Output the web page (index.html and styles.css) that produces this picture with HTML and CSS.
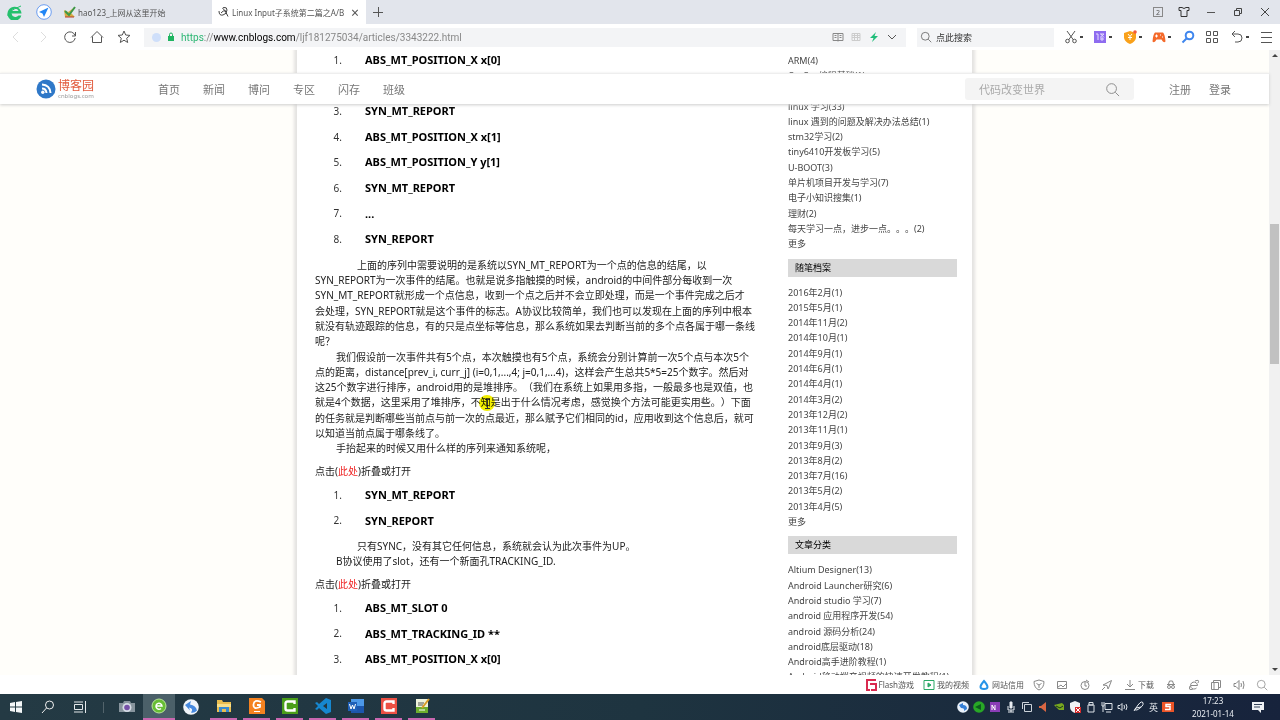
FILE: index.html
```html
<!DOCTYPE html>
<html lang="zh-CN">
<head>
<meta charset="utf-8">
<title>Linux Input子系统第二篇之A/B协议</title>
<link rel="stylesheet" href="styles.css">
</head>
<body>
<svg width="0" height="0" class="defs" aria-hidden="true">
  <symbol id="search" viewBox="0 0 16 16"><circle cx="7" cy="7" r="5.2"/><path d="M11 11l4 4"/></symbol>
  <symbol id="camtasia" viewBox="0 0 16 16"><path d="M12.500 6V3.500H5.500q-2 0-2 2v5q0 2 2 2h7V10" fill="none" stroke="#fff" stroke-width="2.400"/></symbol>
</svg>
<div class="browser">
  <header class="tabs">
    <button class="pin" aria-label="360"><svg viewBox="0 0 16 16"><path d="M14.500 9.500H4.500a4 4 0 0 0 7 2h2.800A7 7 0 1 1 14.500 9.500zM4.600 7h7a3.700 3.700 0 0 0-7 0z" fill="#25c06d"/><path d="M1 12Q-1 8 14 2" fill="none" stroke="#25c06d"/></svg></button>
    <button class="pin" aria-label="导航"><svg viewBox="0 0 16 16"><circle cx="8" cy="8" r="7.300" fill="#fff" stroke="#6a9cf0"/><path d="M12.500 3.500L3 8l3.500 1.500L8 13z" fill="#2286f5"/></svg></button>
    <div class="tab"><svg class="s12" viewBox="0 0 12 12"><path d="M0 4l4 2 7-5-4 6 4 4H1z" fill="#d7ad42"/><path d="M1 5l4 4 6-8" fill="none" stroke="#3d9846" stroke-width="2"/><path d="M1 11h9" stroke="#b53c2d"/></svg><span>hao123_上网从这里开始</span></div>
    <div class="tab active"><svg class="s12" viewBox="0 0 12 12" fill="none" stroke="#444"><path d="M1 5q0 5 4 4 4-1 4-5M9 4q0-3-3-2.500t1 3l3 6M3 7q2-3 5-2"/></svg><span class="title">Linux Input子系统第二篇之A/B</span><button class="x" aria-label="关闭标签">×</button></div>
    <button class="plus" aria-label="新标签"><svg class="s12" viewBox="0 0 12 12" stroke="#555"><path d="M1 6.500h10M6.500 1v10"/></svg></button>
    <div class="wins">
      <button class="two">2</button>
      <button aria-label="皮肤"><svg class="s12" viewBox="0 0 12 12" fill="none" stroke="#333"><path d="M1 1.500h3q2 2 4 0h3v3H9v6H3v-6H1z"/></svg></button>
      <button aria-label="最小化"><svg class="s12" viewBox="0 0 12 12" stroke="#555"><path d="M2 6.500h8"/></svg></button>
      <button aria-label="还原"><svg class="s12" viewBox="0 0 12 12" fill="none" stroke="#444"><path d="M2.500 4.500h5v5h-5zM4.500 4V2.500h5v5H8"/></svg></button>
      <button aria-label="关闭"><svg class="s12" viewBox="0 0 12 12" stroke="#444"><path d="M2 2l8 8M10 2l-8 8"/></svg></button>
    </div>
  </header>

  <div class="toolbar">
    <div class="navs">
      <button aria-label="后退"><svg class="s14" viewBox="0 0 14 14" stroke="#ddd"><path d="M9 2L4 7l5 5"/></svg></button>
      <button aria-label="前进"><svg class="s14" viewBox="0 0 14 14" stroke="#ddd"><path d="M5 2l5 5-5 5"/></svg></button>
      <button aria-label="刷新"><svg class="s14" viewBox="0 0 14 14"><path d="M12 5.500A5.300 5.300 0 1 0 12.200 8M12.500 2v4H9"/></svg></button>
      <button aria-label="主页"><svg class="s14" viewBox="0 0 14 14"><path d="M1 7.500L7 1.500l6 6M2.500 6.500v6h9v-6"/></svg></button>
      <button aria-label="收藏"><svg class="s14" viewBox="0 0 14 14"><path d="M7 1l1.700 4 4.300.4-3.300 2.800 1 4.300L7 10.200l-3.700 2.300 1-4.300L1 5.400 5.300 5z"/></svg></button>
    </div>
    <div class="address">
      <i class="dot"></i>
      <svg class="lock" viewBox="0 0 8 10" stroke="none"><path d="M1 4h6v5H1z" fill="#1fb561"/><path d="M2.500 4V2.500a1.500 1.500 0 0 1 3 0V4" fill="none" stroke="#1fb561"/></svg>
      <span class="url"><span class="scheme">https</span>://<b>www.cnblogs.com</b>/ljf181275034/articles/3343222.html</span>
      <svg class="s12" viewBox="0 0 12 12" stroke="#888"><path d="M1 2.500h10v7H1zM6 2.500v8M2.500 4.500h2M2.500 6.500h2M7.500 4.500h2M7.500 6.500h2"/></svg>
      <svg class="s12" viewBox="0 0 12 12" stroke="#ccc"><path d="M2 2.500h8v7H2zM2 4.500h8M2 6.500h8M4.500 2v8M7.500 2v8"/></svg>
      <svg class="s12" viewBox="0 0 12 12"><path d="M8 1L2 7h3.500L4 11l6-6H6.500z" fill="#20bd7a" stroke="none"/></svg>
      <svg class="s12" viewBox="0 0 12 12"><path d="M2 4l4 4 4-4"/></svg>
    </div>
    <label class="quick"><svg class="s12"><use href="#search"/></svg><input type="text" value="点此搜索" aria-label="搜索"></label>
    <div class="tools">
      <button class="drop" aria-label="截图"><svg class="s14" viewBox="0 0 14 14"><path d="M3 1l6.500 9M11 1L4.500 10"/><circle cx="3.500" cy="11" r="1.800"/><circle cx="10.500" cy="11" r="1.800"/></svg></button>
      <button class="drop" aria-label="翻译"><svg class="s14" viewBox="0 0 14 14" stroke="#e6ddff"><path d="M1 1h12v12H1z" fill="#8e6cf0" stroke="none"/><path d="M3 4h2v6M7 4h4L7 7.500M8 4l3 3.500M7 9h4M9 7v4"/></svg></button>
      <button class="drop" aria-label="钱包"><svg class="s14" viewBox="0 0 14 14" stroke="#fff"><path d="M7 1l6 2v5q-1 4-6 6-5-2-6-6V3z" fill="#f9a11b" stroke="none"/><path d="M5 4l2 2.500L9 4M5 7.500h4M7 6.500V10"/><circle cx="12" cy="2" r="1.800" fill="#f45a3c" stroke="none"/></svg></button>
      <button class="drop" aria-label="游戏"><svg class="s14" viewBox="0 0 14 14" stroke="#fff"><path d="M3 2.500h8q2 2 2.500 9-2 2-4-2h-5q-2 4-4 2Q1 4.500 3 2.500z" fill="#f4692a" stroke="none"/><path d="M3 6h3M4.500 4.500v3M8 5h1M10 7h1"/></svg></button>
      <button aria-label="查找"><svg class="s14" viewBox="0 0 14 14" stroke="#3f86ee" stroke-width="2"><circle cx="8.500" cy="5.500" r="3.800"/><path d="M6 8l-4.500 4.500"/></svg></button>
      <button aria-label="应用"><svg class="s14" viewBox="0 0 14 14"><path d="M1.500 1.500h4v4h-4zM8.500 1.500h4v4h-4zM1.500 8.500h4v4h-4zM8.500 8.500h4v4h-4z"/></svg></button>
      <button class="drop" aria-label="撤销"><svg class="s14" viewBox="0 0 14 14"><path d="M5 1L2 4l3 3M2 4h6a4 4 0 0 1 0 8H5"/></svg></button>
      <button aria-label="菜单"><svg class="s14" viewBox="0 0 14 14"><path d="M2 2.500h11M2 7.500h11M2 12.500h11"/></svg></button>
    </div>
  </div>

  <div class="view">
    <nav class="site">
      <a class="brand" href="#"><svg viewBox="0 0 20 20"><circle cx="10" cy="10" r="9.500" fill="#2f78c8"/><g fill="none" stroke="#fff" stroke-width="2"><path d="M6 9.500q4 0 4.500 4.500M6 5.500q8 .5 8.500 8.500"/></g><circle cx="6.800" cy="13.200" r="1.700" fill="#fff"/></svg><span><b>博客园</b><small>cnblogs.com</small></span></a>
      <div class="links"><a href="#">首页</a><a href="#">新闻</a><a href="#">博问</a><a href="#">专区</a><a href="#">闪存</a><a href="#">班级</a></div>
      <label class="find"><input type="text" placeholder="代码改变世界" aria-label="站内搜索"><svg><use href="#search"/></svg></label>
      <div class="account"><a href="#">注册</a><a href="#">登录</a></div>
    </nav>
    <div class="scrolled">
      <main class="page">
        <article>
          <ol class="first">
            <li>ABS_MT_POSITION_X x[0]</li><li>ABS_MT_POSITION_Y y[0]</li><li>SYN_MT_REPORT</li><li>ABS_MT_POSITION_X x[1]</li><li>ABS_MT_POSITION_Y y[1]</li><li>SYN_MT_REPORT</li><li>...</li><li>SYN_REPORT</li>
          </ol>
          <p class="deep">上面的序列中需要说明的是系统以SYN_MT_REPORT为一个点的信息的结尾，以<br>SYN_REPORT为一次事件的结尾。也就是说多指触摸的时候，android的中间件部分每收到一次<br>SYN_MT_REPORT就形成一个点信息，收到一个点之后并不会立即处理，而是一个事件完成之后才<br>会处理，SYN_REPORT就是这个事件的标志。A协议比较简单，我们也可以发现在上面的序列中根本<br>就没有轨迹跟踪的信息，有的只是点坐标等信息，那么系统如果去判断当前的多个点各属于哪一条线<br>呢？</p>
          <p>我们假设前一次事件共有5个点，本次触摸也有5个点，系统会分别计算前一次5个点与本次5个<br>点的距离，distance[prev_i, curr_j] (i=0,1,...,4; j=0,1,...4)，这样会产生总共5*5=25个数字。然后对<br>这25个数字进行排序，android用的是堆排序。（我们在系统上如果用多指，一般最多也是双值，也<br>就是4个数据，这里采用了堆排序，不<span class="spot">知<svg viewBox="0 0 16 16"><circle cx="8" cy="8" r="8" fill="#f3ef00"/><path d="M6 4.500h5M6 13.500h5M8.500 5v8" stroke="#333"/></svg></span>是出于什么情况考虑，感觉换个方法可能更实用些。）下面<br>的任务就是判断哪些当前点与前一次的点最近，那么赋予它们相同的id，应用收到这个信息后，就可<br>以知道当前点属于哪条线了。</p>
          <p>手抬起来的时候又用什么样的序列来通知系统呢，</p>
          <div class="fold">点击(<a href="#">此处</a>)折叠或打开</div>
          <ol><li>SYN_MT_REPORT</li><li>SYN_REPORT</li></ol>
          <p class="deep">只有SYNC，没有其它任何信息，系统就会认为此次事件为UP。</p>
          <p>B协议使用了slot，还有一个新面孔TRACKING_ID.</p>
          <div class="fold">点击(<a href="#">此处</a>)折叠或打开</div>
          <ol><li>ABS_MT_SLOT 0</li><li>ABS_MT_TRACKING_ID **</li><li>ABS_MT_POSITION_X x[0]</li></ol>
        </article>
        <aside>
          <ul><li><a href="#">ARM(4)</a></li><li><a href="#">C、C++编程基础(1)</a></li></ul>
          <ul class="next"><li><a href="#">linux 学习(33)</a></li><li><a href="#">linux 遇到的问题及解决办法总结(1)</a></li><li><a href="#">stm32学习(2)</a></li><li><a href="#">tiny6410开发板学习(5)</a></li><li><a href="#">U-BOOT(3)</a></li><li><a href="#">单片机项目开发与学习(7)</a></li><li><a href="#">电子小知识搜集(1)</a></li><li><a href="#">理财(2)</a></li><li><a href="#">每天学习一点，进步一点。。。(2)</a></li><li><a href="#">更多</a></li></ul>
          <h3>随笔档案</h3>
          <ul><li><a href="#">2016年2月(1)</a></li><li><a href="#">2015年5月(1)</a></li><li><a href="#">2014年11月(2)</a></li><li><a href="#">2014年10月(1)</a></li><li><a href="#">2014年9月(1)</a></li><li><a href="#">2014年6月(1)</a></li><li><a href="#">2014年4月(1)</a></li><li><a href="#">2014年3月(2)</a></li><li><a href="#">2013年12月(2)</a></li><li><a href="#">2013年11月(1)</a></li><li><a href="#">2013年9月(3)</a></li><li><a href="#">2013年8月(2)</a></li><li><a href="#">2013年7月(16)</a></li><li><a href="#">2013年5月(2)</a></li><li><a href="#">2013年4月(5)</a></li><li><a href="#">更多</a></li></ul>
          <h3>文章分类</h3>
          <ul><li><a href="#">Altium Designer(13)</a></li><li><a href="#">Android Launcher研究(6)</a></li><li><a href="#">Android studio 学习(7)</a></li><li><a href="#">android 应用程序开发(54)</a></li><li><a href="#">android 源码分析(24)</a></li><li><a href="#">android底层驱动(18)</a></li><li><a href="#">Android高手进阶教程(1)</a></li><li><a href="#">Android移动端音视频的快速开发教程(1)</a></li></ul>
        </aside>
      </main>
    </div>
    <div class="scrollbar"><i class="up"></i><i class="thumb"></i><i class="down"></i></div>
  </div>

  <footer class="status">
    <span><svg class="s12" viewBox="0 0 12 12" fill="none" stroke="#d92a4f" stroke-width="2"><path d="M11 1H2v10h3M5 5h6v6H6"/></svg>Flash游戏</span>
    <span><svg class="s12" viewBox="0 0 12 12" fill="none" stroke="#2aa866"><path d="M1 1.500h10v9H1z"/><path d="M5 4l3 2-3 2z" fill="#2aa866"/></svg>我的视频</span>
    <span><svg class="s12" viewBox="0 0 12 12" fill="none" stroke="#2694e8" stroke-width="2"><path d="M6 2q-7 8 0 8t0-8z"/></svg>网站信用</span>
    <div class="mini">
      <svg class="s12" viewBox="0 0 12 12"><path d="M6 1l5 1.500Q11 9 6 11 1 9 1 2.500zM3.500 4.500L6 6l2.500-1.500M6 6v3"/></svg>
      <svg class="s12" viewBox="0 0 12 12"><path d="M1.500 2.500h9v7h-9zM2 8l3-2 2 2 3-3"/></svg>
      <svg class="s12" viewBox="0 0 12 12"><circle cx="6" cy="6.500" r="4"/><path d="M6 3v4h2M7 1l3 2"/></svg>
      <svg class="s12" viewBox="0 0 12 12"><path d="M10.500 1.500L4 5 2 6l4 .5L7 10l1-2zM4 8l-3 3"/></svg>
      <span><svg class="s12" viewBox="0 0 12 12"><path d="M6 1v7M3 5l3 3 3-3M1 10.500h10"/></svg>下载</span>
      <svg class="s12" viewBox="0 0 12 12"><path d="M2 5.500h8M3.500 5l1-3h3l1 3"/><circle cx="4" cy="8" r="1.500"/><circle cx="8" cy="8" r="1.500"/></svg>
      <svg class="s12" viewBox="0 0 12 12"><path d="M3 6.500h6.500a3.500 3.500 0 1 0-1 2.500M2 7q-2 5 3 3M7 2q5-2 3 2"/></svg>
      <svg class="s12" viewBox="0 0 12 12"><path d="M1.500 3.500h7v7h-7zM3.500 3V1.500h7v7H9M4 3.500v7"/></svg>
      <svg class="s12" viewBox="0 0 12 12"><path d="M1 4.500h2l3-3v9l-3-3H1zM8 4q1 2 0 4M10 2q2 4 0 8"/></svg>
      <svg class="s12"><use href="#search"/></svg>
    </div>
  </footer>
</div>

<div class="taskbar">
  <div class="apps">
    <button aria-label="开始"><svg viewBox="0 0 16 16" fill="#f4f7f8"><path d="M2 4l5-1v4.500H2zM8 3l6-1v5.500H8zM2 8.500h5V13l-5-1zM8 8.500h6V14l-6-1z"/></svg></button>
    <button aria-label="搜索"><svg viewBox="0 0 16 16" fill="none" stroke="#eee"><circle cx="9.500" cy="6" r="4"/><path d="M6.500 9L2 14"/></svg></button>
    <button aria-label="任务视图"><svg viewBox="0 0 16 16" fill="none" stroke="#e4e8ea"><path d="M2.500 5.500h8v5h-8zM2 3h9M2 13h9M13.500 2v12"/></svg></button>
    <i class="sep"></i>
    <button aria-label="相机"><svg viewBox="0 0 16 16"><path d="M0 4h4l1-2h6l1 2h4v9H0z" fill="#87949d"/><circle cx="8" cy="8.500" r="4.500" fill="#d5dce5"/><circle cx="8" cy="8.500" r="2.800" fill="#7651a8"/></svg></button>
    <button class="on run" aria-label="浏览器"><svg viewBox="0 0 16 16"><circle cx="8" cy="8" r="7" fill="#67bd34" stroke="#b9e39c"/><path d="M5 8h6a3 3 0 1 0-1 2.500" fill="none" stroke="#fff" stroke-width="1.500"/></svg></button>
    <button aria-label="飞鸟"><svg viewBox="0 0 16 16"><circle cx="8" cy="8" r="7.800" fill="#f1f5fa"/><path d="M2 6l6-4-1 3.500q6 1 7 6-3 3-6 2 3-4-2-5l1 3z" fill="#4789de"/></svg></button>
    <button class="run" aria-label="文件夹"><svg viewBox="0 0 16 16"><path d="M1 2h5l1 2h8v10H1z" fill="#e9bd50"/><path d="M1 6h14v3H1z" fill="#f8df8a"/><path d="M3 14V9h10v5h-3v-3H6v3z" fill="#398bd0"/></svg></button>
    <button class="run" aria-label="PDF"><svg viewBox="0 0 16 16"><path d="M0 0h13l3 3v13H0z" fill="#f58220"/><path d="M12 4Q5 1 4.500 6.500T11 9V7H8" fill="none" stroke="#fff" stroke-width="1.800"/><path d="M5 13.500h6" stroke="#fff"/></svg></button>
    <button class="run" aria-label="Camtasia"><svg viewBox="0 0 16 16"><path d="M0 0h16v16H0z" fill="#4a9e19"/><use href="#camtasia" width="16" height="16"/></svg></button>
    <button class="run" aria-label="VS Code"><svg viewBox="0 0 16 16"><path d="M11 0l5 2v12l-5 2-7-6-2 2-2-1 3-3-3-3 2-1 2 2zM12 5L8 8l4 3z" fill="#1687cf" fill-rule="evenodd"/></svg></button>
    <button class="run" aria-label="Word"><svg viewBox="0 0 16 16"><path d="M3 1h13v14H3z" fill="#4c98e8"/><path d="M3 8h13v7H3z" fill="#1c56ac"/><path d="M0 4h9v9H0z" fill="#1f5fb7"/><path d="M1.500 6l1.500 5 1.500-4L6 11l1.500-5" fill="none" stroke="#fff"/></svg></button>
    <button class="run" aria-label="录制"><svg viewBox="0 0 16 16"><path d="M0 0h16v16H0z" fill="#ec5044"/><use href="#camtasia" width="16" height="16"/></svg></button>
    <button class="run" aria-label="编辑器"><svg viewBox="0 0 16 16"><path d="M2 1h12v14H2z" fill="#eef3dc"/><path d="M2 9h12v6H2z" fill="#6dae2d"/><path d="M4 5h6M4 7h5" stroke="#555"/><path d="M15 1L8 10" stroke="#d89b26" stroke-width="2"/><path d="M5 12h6" stroke="#fff"/></svg></button>
  </div>
  <div class="tray">
    <svg class="s12" viewBox="0 0 12 12"><circle cx="6" cy="6" r="5.800" fill="#eaf2fb"/><path d="M2 4l4-2v2q4 0 4 4l-3 2q1-3-3-3z" fill="#357fd6"/></svg>
    <svg class="s12" viewBox="0 0 12 12"><circle cx="6" cy="6" r="5.800" fill="#28a726"/><path d="M2 6l6-3v6z" fill="#0b5d1b"/></svg>
    <svg class="s12" viewBox="0 0 12 12"><path d="M1 1h10v10H1z" fill="#8b3db7"/><path d="M3 9V4l3 5V4" fill="none" stroke="#fff"/></svg>
    <svg class="s12" viewBox="0 0 12 12" fill="none" stroke="#e9edf2"><path d="M5 1h2v6H5z" fill="#e9edf2"/><path d="M3 5v4h6V5M6 9v2M3 11h6"/></svg>
    <svg class="s12" viewBox="0 0 12 12" fill="none" stroke="#ccd3da"><path d="M3.500 3.500h7v7h-7zM1.500 8V1.500H8"/></svg>
    <svg class="s12" viewBox="0 0 12 12"><path d="M2 5h2l5-4v10L4 7H2z" fill="#d86643"/></svg>
    <svg class="s12" viewBox="0 0 12 12"><path d="M1 4l8-2 2 2v5H6z" fill="#78a81f"/><path d="M3 5l4 2 3-2" fill="none" stroke="#17351c"/></svg>
    <svg class="s12" viewBox="0 0 12 12"><path d="M6 0l5 2v4q0 4-5 6-5-2-5-6V2z" fill="#f0f2f4"/><path d="M6 6h6v6H6z" fill="#d62b2b"/><path d="M7 7l4 4M11 7l-4 4" stroke="#fff"/></svg>
    <svg class="s12" viewBox="0 0 12 12" fill="none" stroke="#dce1e7"><path d="M4 1.500h4V4H4zM3 4h6v7H3z"/></svg>
    <svg class="s12" viewBox="0 0 12 12" fill="none" stroke="#dce1e7"><path d="M4 2.500h7v6H4zM5 11h5M1 1v4h2V1M2 5v6"/></svg>
    <svg class="s12" viewBox="0 0 12 12" fill="none" stroke="#dce1e7"><path d="M1 4.500h2l2-2v7l-2-2H1zM7 4q1 2 0 4M9 3q2 3 0 6"/></svg>
    <svg class="s12" viewBox="0 0 12 12" fill="none" stroke="#e9edf2"><path d="M1 10l4-6q4-5 5-2T4 9q-4 0-1-2l5-1"/></svg>
    <span class="ime">英</span>
    <svg class="s12" viewBox="0 0 12 12"><path d="M0 1h12v10H0z" fill="#ec5427"/><path d="M9 3.500H4v2h4v3H3" fill="none" stroke="#fff" stroke-width="1.500"/></svg>
    <time>17:23<br>2021-01-14</time>
    <svg class="note" viewBox="0 0 12 12"><path d="M0 1h12v8H9v3L6 9H0z" fill="#eef1f4"/><path d="M2 3.500h8M2 6h6" stroke="#35435a"/></svg>
  </div>
</div>
</body>
</html>
```
FILE: styles.css
```css
* { box-sizing: border-box; }
body { margin: 0; height: 100vh; display: flex; flex-direction: column; overflow: hidden; font-family: "Noto Sans", "Noto Sans CJK SC", sans-serif; font-size: 10px; text-spacing-trim: space-all; color: #333; background: #fff; }
button { border: 0; padding: 0; background: none; font: inherit; color: inherit; display: grid; place-items: center; }
input { border: 0; padding: 0; background: none; font: inherit; color: inherit; min-width: 0; outline: 0; }
a { color: inherit; text-decoration: none; }
svg { display: block; flex: none; }
ul, ol, p, h3 { margin: 0; padding: 0; }
ul, ol { list-style: none; }
.defs { position: absolute; }
.s12 { width: 12px; height: 12px; }
.s14 { width: 14px; height: 14px; }
.browser { flex: 1; min-height: 0; display: flex; flex-direction: column; }

.tabs { height: 24px; display: flex; align-items: center; background: #e2e5ec; font-size: 8px; color: #555; }
.pin { width: 29px; }
.pin svg { width: 16px; height: 16px; }
.tab { width: 154px; height: 24px; padding: 0 6px; display: flex; align-items: center; gap: 2px; white-space: nowrap; }
.tab.active { background: #fff; padding-left: 6px; }
.tab .title { flex: 1; }
.x { font-size: 14px; width: 10px; }
.plus { width: 24px; }
.wins { margin-left: auto; display: flex; gap: 15px; padding-right: 9px; }
.two { width: 10px; height: 10px; border: 1px solid #888; font-size: 7px; align-self: center; }

.toolbar { height: 26px; display: flex; align-items: center; background: #fff; fill: none; stroke: #555; }
.navs { width: 144px; padding-left: 9px; display: flex; gap: 13px; }
.address { flex: 1; height: 19px; display: flex; align-items: center; gap: 6px; padding: 0 8px; background: #f3f4f6; font-size: 10px; color: #888; }
.dot { width: 9px; height: 9px; border-radius: 50%; background: #cfdffa; }
.lock { width: 8px; height: 10px; }
.url { flex: 1; white-space: nowrap; font-family: Roboto, "Noto Sans", sans-serif; }
.scheme { color: #2bb673; }
.url b { font-weight: 400; color: #000; }
.quick { width: 137px; height: 19px; margin-left: 11px; display: flex; align-items: center; gap: 4px; padding: 0 3px; background: #f3f4f6; font-size: 9px; }
.quick input { flex: 1; }
.tools { width: 226px; padding: 0 7px 0 10px; display: flex; justify-content: space-between; }
.drop { grid-auto-flow: column; gap: 2px; }
.drop::after { content: ""; width: 3px; height: 2px; background: #444; }

.view { flex: 1; min-height: 0; position: relative; display: flex; }
.scrolled { flex: 1; overflow: hidden; background: #fffefa; padding: 0 297px; }
.site { position: absolute; top: 23px; left: 0; right: 11px; height: 31px; z-index: 2; display: flex; align-items: center; background: #fff; border-top: 1px solid #eee; box-shadow: 0 1px 3px #ccc; font-size: 11px; color: #777; }
.brand { width: 158px; padding-left: 36px; display: flex; gap: 2px; align-items: center; }
.brand svg { width: 20px; height: 20px; }
.brand b { display: block; font-size: 12px; line-height: 14px; font-weight: 400; color: #e2593b; }
.brand small { display: block; font-size: 6px; line-height: 6px; color: #999; }
.links { flex: 1; display: flex; gap: 23px; }
.find { width: 169px; height: 22px; display: flex; align-items: center; padding: 0 14px; background: #f4f4f4; border-radius: 3px; }
.find input { flex: 1; }
.find input::placeholder { color: #aaa; }
.find svg { width: 15px; height: 15px; fill: none; stroke: #888; }
.account { width: 135px; padding-left: 35px; display: flex; gap: 18px; }

.page { min-height: 100%; background: #fff; box-shadow: 0 0 3px 3px #e4e3e1; display: flex; }
article { flex: 1; padding-left: 18px; color: #222; white-space: nowrap; line-height: 1.53; }
article ol { counter-reset: n; padding-bottom: 6px; }
article li { counter-increment: n; display: flex; align-items: center; padding: 4px 0; font-size: 11px; line-height: 1.6; font-weight: 700; color: #000; }
article li::before { content: counter(n) "."; width: 27px; margin-right: 23px; text-align: right; font-size: 10px; font-weight: 400; color: #333; }
.first li:first-child { padding-top: 1px; }
article p { text-indent: 21px; }
article p.deep { text-indent: 42px; }
.fold { padding: 7px 0 3px; }
.fold a { color: #e22; }
.spot { position: relative; }
.spot svg { position: absolute; left: -2px; top: 0; width: 16px; height: 16px; mix-blend-mode: multiply; }
aside { width: 184px; padding: 3px 15px 0 0; font-size: 9px; line-height: 1.7; white-space: nowrap; color: #444; }
.next { margin-top: 15px; }
h3 { height: 18px; margin: 7px 0 8px; padding-left: 7px; background: #d9d9d9; font-size: 9px; line-height: 18px; font-weight: 400; color: #000; }

.scrollbar { width: 11px; background: #f1f1f1; display: flex; flex-direction: column; align-items: center; padding: 4px 0; }
.up, .down { border: 3px solid transparent; }
.up { border-top: 0; border-bottom-color: #444; }
.down { border-bottom: 0; border-top-color: #444; margin-top: auto; }
.thumb { width: 9px; height: 140px; margin-top: 167px; background: #c1c1c1; }

.status { height: 19px; padding-right: 12px; display: flex; justify-content: flex-end; align-items: center; gap: 9px; background: #fff; font-size: 8px; color: #555; }
.status span { display: flex; align-items: center; gap: 2px; white-space: nowrap; }
.mini { width: 235px; display: flex; justify-content: space-between; fill: none; stroke: #888; }

.taskbar { height: 26px; display: flex; justify-content: space-between; background: linear-gradient(90deg, #243a44, #1e3440 50%, #17233c); color: #e9edf2; }
.apps { display: flex; align-items: center; }
.apps button { width: 32px; height: 26px; }
.apps button.run { border-bottom: 2px solid #c967b0; background-clip: padding-box; width: 27px; margin: 0 3px; }
.apps button.on { width: 32px; margin: 0; background-color: #4b6069; }
.apps svg { width: 16px; height: 16px; }
.sep { width: 1px; height: 11px; margin: 0 7px; background: #52636b; }
.tray { display: flex; align-items: center; gap: 4px; padding-right: 16px; }
.tray time { width: 70px; text-align: center; font-size: 8px; line-height: 13px; }
.ime { font-size: 9px; }
.note { width: 12px; height: 12px; }
```
